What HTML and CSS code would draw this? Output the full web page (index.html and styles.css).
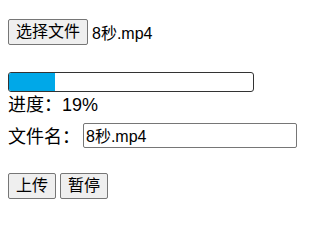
FILE: index.html
```html
<!DOCTYPE html>
<html lang="zh-CN">
<head>
<meta charset="utf-8">
<title>上传</title>
<link rel="stylesheet" href="styles.css">
</head>
<body>
<div class="file-row">
  <button class="btn" type="button">选择文件</button>
  <span class="file-name">8秒.mp4</span>
</div>
<div class="progress"><div class="progress-fill" style="width: 19%"></div></div>
<div class="percent">进度：19%</div>
<div class="name-row">
  <label class="name-label" for="fname">文件名：</label>
  <input class="name-input" id="fname" type="text" value="8秒.mp4">
</div>
<div class="actions">
  <button class="btn" type="button">上传</button>
  <button class="btn" type="button">暂停</button>
</div>
</body>
</html>
```
FILE: styles.css
```css
html, body {
  background: #ffffff;
}
body {
  margin: 8px;
  font-family: "Liberation Sans", "Noto Sans CJK SC", sans-serif;
  color: #000;
}
.file-row {
  display: flex;
  align-items: center;
  gap: 4px;
  margin-top: 11px;
}
.btn {
  font-family: "Liberation Sans", "Noto Sans CJK SC", sans-serif;
  font-size: 16px;
  height: 26px;
  padding: 0 7px;
  line-height: 1;
  color: #000;
  background: #efefef;
  border: 1px solid #767676;
  border-radius: 2px;
  margin: 0;
}
.file-name {
  font-size: 16px;
}
.progress {
  margin-top: 27px;
  width: 244px;
  height: 18px;
  border: 1px solid #333;
  border-radius: 3px;
  overflow: hidden;
  background: #fff;
}
.progress-fill {
  height: 100%;
  background: #00a8e8;
}
.percent {
  font-size: 18px;
  line-height: 24px;
  margin-top: 1px;
}
.name-row {
  display: flex;
  align-items: center;
  gap: 3px;
  margin-top: 5px;
}
.name-label {
  font-size: 18px;
}
.name-input {
  width: 214px;
  height: 25px;
  box-sizing: border-box;
  padding: 1px 2px;
  font-family: "Liberation Sans", "Noto Sans CJK SC", sans-serif;
  font-size: 16px;
  border: 1px solid #767676;
  border-radius: 2px;
  margin: 0;
}
.actions {
  display: flex;
  gap: 4px;
  margin-top: 25px;
}
```
